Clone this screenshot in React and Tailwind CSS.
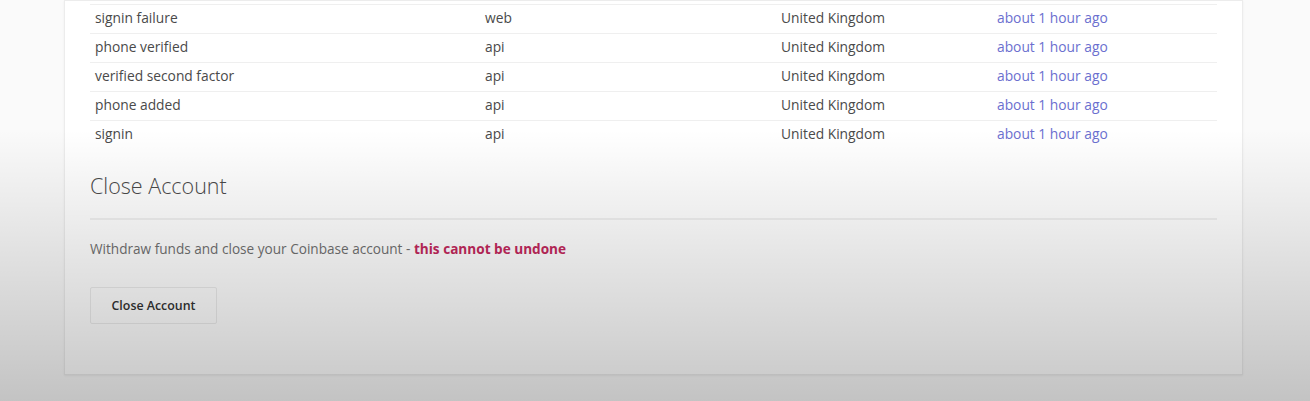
const events = [
  { action: "signin failure", source: "web" },
  { action: "phone verified", source: "api" },
  { action: "verified second factor", source: "api" },
  { action: "phone added", source: "api" },
  { action: "signin", source: "api" },
];

export default function App() {
  return (
    <div
      className="relative h-[401px] w-[1310px] overflow-hidden bg-[#fafafa] text-[#4a4a4a]"
      style={{ fontFamily: "'Open Sans', Lato, sans-serif" }}
    >
      <div className="ml-[64px] w-[1179px] h-[375px] bg-white border border-[#ececec] shadow-[0_1px_2px_rgba(0,0,0,0.06)] px-[25px] pt-[3px]">
        <div>
          {events.map((e, i) => (
            <div
              key={i}
              className="flex items-center h-[29px] border-t border-[#efefef] pl-[5px] text-[13.8px] pb-[1px]"
            >
              <div className="w-[390px]">{e.action}</div>
              <div className="w-[296px]">{e.source}</div>
              <div className="w-[216px]">United Kingdom</div>
              <div className="text-[#6b6fcf]">about 1 hour ago</div>
            </div>
          ))}
        </div>

        <h2 className="mt-[23px] text-[21.5px] font-light text-[#4a4a4a] leading-[28px]">
          Close Account
        </h2>
        <div className="mt-[18px] border-t-2 border-[#f0f0f0]" />
        <p className="mt-[19px] text-[13.6px] text-[#707070]">
          Withdraw funds and close your Coinbase account -{" "}
          <span className="font-bold text-[#c2285c]">this cannot be undone</span>
        </p>
        <button className="mt-[28px] h-[37px] w-[127px] border border-[#ececec] rounded-[2px] text-[12.4px] font-semibold text-[#333] bg-transparent">
          Close Account
        </button>
      </div>

      <div className="pointer-events-none absolute inset-0 bg-[linear-gradient(to_bottom,rgba(0,0,0,0)_0px,rgba(0,0,0,0)_130px,rgba(0,0,0,0.22)_401px)]" />
    </div>
  );
}
